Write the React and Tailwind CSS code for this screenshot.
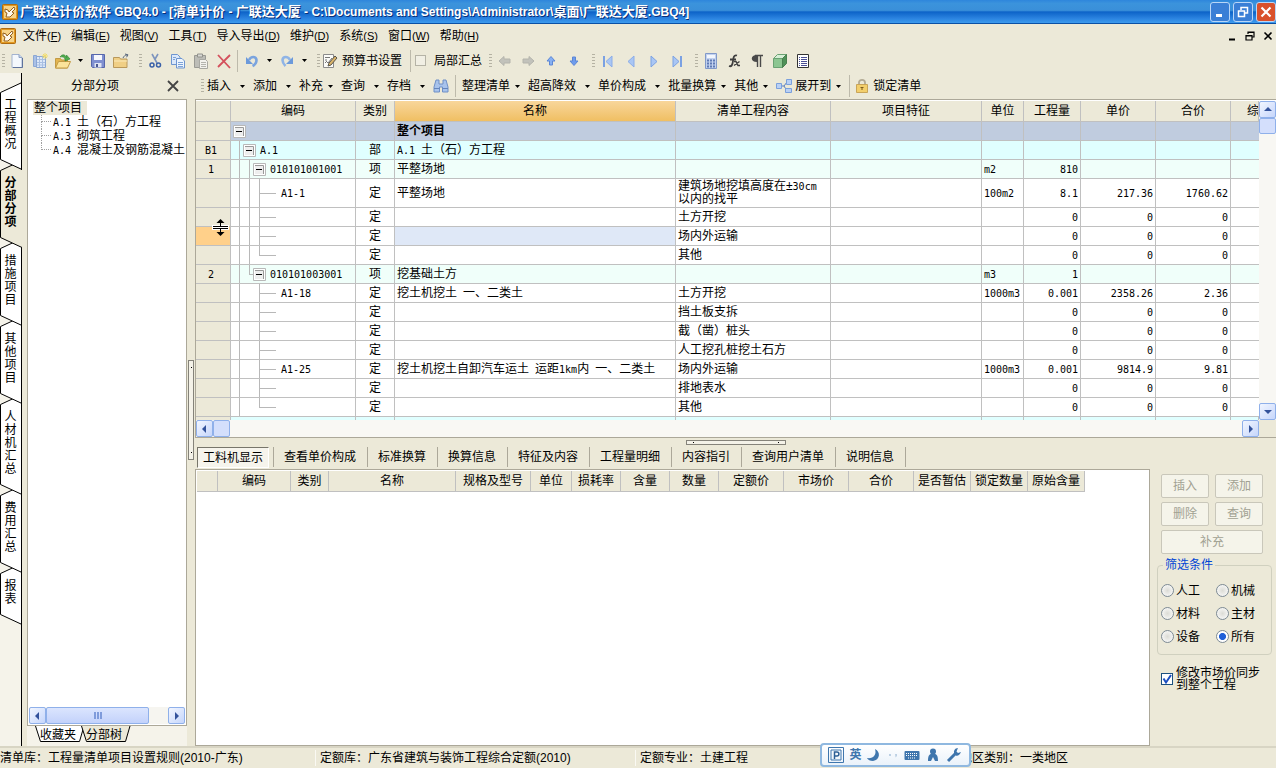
import React, { useState } from 'react'
import clsx from 'clsx'

const Ic = ({ children, className }) => (
  <svg viewBox="0 0 16 16" className={clsx('w-4 h-4 shrink-0', className)} fill="none" aria-hidden="true">
    {children}
  </svg>
)

const icons = {
  newFile: <Ic><path d="M3 1.500h7l3 3v10H3z" fill="#f4f8fd" stroke="#a3b3cf" /><path d="M10 1.500v3h3" fill="#c7d6ee" stroke="#8b9fc2" /><path d="M13.500 5v9.500H4" stroke="#5f739c" /></Ic>,
  newTable: <Ic><path d="M1.500 2.500h3v11h-3z" fill="#a9c0e6" stroke="#8ba7d4" /><path d="M4.500 3.500h9v11h-9z" fill="#dde8f8" stroke="#8ba7d4" /><path d="M5 6.500h8M5 9.500h8M5 12h8M7.500 4v10M10.500 4v10" stroke="#a9bfe2" /><path d="M13 0v6M10 3h6M11 1l4 4M15 1l-4 4" stroke="#f2dc6a" /></Ic>,
  open: <Ic><path d="M.5 5.500h5l1 1.500h6v8H.5z" fill="#e3b550" stroke="#c29a44" /><path d="M3.500 8.500h12l-3 6.500H.5z" fill="#fbe39a" stroke="#c29a44" /><path d="M5 4c2-3 5-3 6.500.5V2l3.500 4-5 2V6C9.500 4 7.500 3.500 5 4z" fill="#4fae4b" stroke="#2f7f35" strokeWidth=".6" /></Ic>,
  save: <Ic><path d="M1.500 1.500h13v13h-12l-1-1z" fill="#7f8fd0" stroke="#5767ab" /><path d="M4 2h8v5H4z" fill="#f6f7fc" /><path d="M4.500 10h7v4.500h-7z" fill="#dfe3f3" /><path d="M6 11h2v3H6z" fill="#4a5890" /></Ic>,
  folder: <Ic><path d="M.5 4.500h6l1 1.500h6.500v8.500H.5z" fill="#f0cf85" stroke="#b9985a" /><path d="M1 8h13" stroke="#fbeabb" /><path d="M10 5c1-2 2-3 4-3M12 1l3 .8-1.500 2.500" stroke="#56657c" /></Ic>,
  cut: <Ic><path d="M5 1l5 9M11 1L7.500 7" stroke="#7e95be" strokeWidth="1.600" /><circle cx="5" cy="12" r="2" stroke="#3960a8" strokeWidth="1.500" /><circle cx="11.500" cy="12" r="2" stroke="#3960a8" strokeWidth="1.500" /></Ic>,
  copy: <Ic><path d="M1.500 1.500h6l2.500 2.500v7.500H1.500z" fill="#dbe8fa" stroke="#6d95d0" /><path d="M6.500 5.500h5.500l2.500 2.500v7H6.500z" fill="#eef5fd" stroke="#6d95d0" /><path d="M8 9.500h5M8 11.500h5M8 13.500h5M3 4.500h3M3 6.500h2" stroke="#7ca2d8" /></Ic>,
  paste: <Ic><path d="M1.500 2.500h11v12h-11z" fill="#bdbdb7" stroke="#9a9a94" /><path d="M4.500 1h5v3h-5z" fill="#d9d9d4" stroke="#92928c" /><path d="M6.500 6.500h6l2 2v7h-8z" fill="#f2f2ee" stroke="#a8a8a2" /><path d="M8 9.500h5M8 11.500h5M8 13.500h5" stroke="#b4b4ae" /></Ic>,
  del: <Ic><path d="M2 2l12 13M14 2L2 14" stroke="#d4505c" strokeWidth="1.800" /></Ic>,
  undo: <Ic><path d="M5 7c2-4 7-4 7.500 0 0 3-2 5-4 6" stroke="#7ba4de" strokeWidth="2.600" /><path d="M2 4v7h7z" fill="#6c9adb" /></Ic>,
  redo: <Ic><path d="M11 7C9 3 4 3 3.500 7c0 3 1 4 3 6" stroke="#8fb4e6" strokeWidth="2.600" /><path d="M14 4v7H7z" fill="#6c9adb" /></Ic>,
  edit: <Ic><path d="M1.500 1.500h10v13h-10z" fill="#fbfbf8" stroke="#8b8b8b" /><path d="M3 4.500h5M3 7h2M3 9.500h1" stroke="#777" /><path d="M4 8l2 2 4-5" stroke="#777" /><path d="M6 13l1-3 6-7 2 2-6 7z" fill="#d9b36a" stroke="#5a564c" /></Ic>,
  left: <Ic><path d="M2 8l5-4.500v2.500h6v4H7v2.500z" fill="#c2c2bb" stroke="#b4b4ac" /></Ic>,
  right: <Ic><path d="M14 8L9 3.500v2.500H3v4h6v2.500z" fill="#c2c2bb" stroke="#b4b4ac" /></Ic>,
  up: <Ic><path d="M8 3.500L4 8h2.500v4h3V8H12z" fill="#86b0f2" stroke="#5c87d6" /></Ic>,
  down: <Ic><path d="M8 12.500L4 8h2.500V4h3v4H12z" fill="#6f9cec" stroke="#5c87d6" /></Ic>,
  first: <Ic><path d="M4 3v11" stroke="#7ba1e2" strokeWidth="2" /><path d="M12 3v11L6 8.500z" fill="#a9c6f4" stroke="#8bade8" /></Ic>,
  prev: <Ic><path d="M11 3v11L5 8.500z" fill="#a9c6f4" stroke="#8bade8" /></Ic>,
  next: <Ic><path d="M5 3v11l6-5.500z" fill="#a9c6f4" stroke="#7ba1e2" /></Ic>,
  last: <Ic><path d="M12 3v11" stroke="#7ba1e2" strokeWidth="2" /><path d="M4 3v11l6-5.500z" fill="#a9c6f4" stroke="#7ba1e2" /></Ic>,
  calc: <Ic><path d="M2.500.500h11v15h-11z" fill="#c3d2ef" stroke="#8199c8" /><path d="M4 2h8v3H4z" fill="#f2f6fd" /><path d="M4 7.500h8M4 10.500h8M4 13.500h8" stroke="#5f7ab5" strokeWidth="2" strokeDasharray="2 1" /></Ic>,
  fx: <Ic><path d="M11 2.500C8 1.500 7.500 4 7 8s-1.500 6-4 5M4 6.500h6" stroke="#3e3e3e" strokeWidth="1.800" /><path d="M8 8.500h2l2 4h2M13.500 8.500L8 12.500" stroke="#3e3e3e" strokeWidth="1.400" /></Ic>,
  para: <Ic><path d="M14 2.500H6M8.500 2v12M11.500 2v12" stroke="#4a4a4a" strokeWidth="1.400" /><path d="M8 2C1 2 1 9 8 9z" fill="#4a4a4a" /></Ic>,
  cube: <Ic><path d="M1.500 5.500h9v9h-9z" fill="#8cc691" stroke="#6ba273" /><path d="M1.500 5.500l4-4h9l-4 4z" fill="#d6efd6" stroke="#6ba273" /><path d="M10.500 5.500l4-4v9l-4 4z" fill="#4f9158" stroke="#48804f" /></Ic>,
  list: <Ic><path d="M2.500 1.500h11v13h-11z" fill="#fff" stroke="#333" /><path d="M4 4.500h1M4 6.500h1M4 8.500h1M4 10.500h1M4 12.500h1M6 4.500h6M6 6.500h6M6 8.500h6M6 10.500h6M6 12.500h6" stroke="#4a4f95" /></Ic>,
  find: <Ic><path d="M3 2h3v4h4V2h3l2 7v5H9.500V9h-3v5H1V9z" fill="#a8c3ec" stroke="#6f8fc6" /><path d="M1 10.500h5.500M9.500 10.500H15" stroke="#6485bd" /></Ic>,
  expand: <Ic><path d="M5 8h3M8 8l3-4M8 8l3 5" stroke="#5b7fc0" /><path d="M.5 5.500h5v5h-5zM10.500 1.500h5v5h-5zM9.500 10.500h6v4h-6z" fill="#b9d0f4" stroke="#7ba0dc" /></Ic>,
  lock: <Ic><path d="M5 7V4.500c0-3.500 6-3.500 6 0V7" stroke="#b3ab95" strokeWidth="1.800" /><path d="M2.500 6.500h11v8h-11z" fill="#f3cf6c" stroke="#c9a558" /><path d="M8 9v3M6.500 9.500h3" stroke="#7d5c1d" /></Ic>,
}

const AppLogo = () => (
  <Ic>
    <rect x=".5" y=".5" width="15" height="15" rx="1" fill="#e39a22" stroke="#b06c10" />
    <path d="M2 2h12v12H2z" fill="#f7d48a" />
    <path d="M3 5l3 1 1 2 5-5 1 2-3 3 2 1-4 4H4l1-4-2-1z" fill="#fffaf0" stroke="#8a520a" strokeWidth=".9" />
  </Ic>
)

// latin runs are set in a half-width mono so they line up with the hanzi
const Txt = ({ children }) =>
  String(children).split(/([\x20-\x7e]+)/).map((s, i) =>
    i % 2 ? <span key={i} className="font-['DejaVu_Sans_Mono',monospace] text-[10px] whitespace-pre">{s}</span> : s
  )

const Grip = ({ first }) => (
  <div className={clsx('flex justify-end shrink-0', first ? 'w-[5px]' : 'w-[11px] pr-px')}>
    <svg viewBox="0 0 3 14" className="w-[3px] h-[14px]" aria-hidden="true">
      <path d="M0 .5h3M0 3.500h3M0 6.500h3M0 9.500h3M0 12.500h3" stroke="#b5b2a3" />
    </svg>
  </div>
)

const Divider = ({ className }) => <div className={clsx('w-px h-[22px] bg-[#bdbaab] shrink-0', className)}></div>

const Caret = ({ size }) => (
  <button aria-label="更多" className={clsx('flex justify-center items-center h-5 shrink-0', size === 'wide' && 'w-[22px]', size === 'slim' && 'w-3', !size && 'w-[14px] mr-1')}>
    <svg viewBox="0 0 5 3" className="w-[5px] h-[3px]"><path d="M0 0h5L2.500 3z" fill="#000" /></svg>
  </button>
)

const IconBtn = ({ name, className }) => (
  <button aria-label={name} className={clsx('h-[22px] flex items-center justify-center shrink-0', className || 'w-[23px]')}>{icons[name]}</button>
)

const menus = [['文件', 'F'], ['编辑', 'E'], ['视图', 'V'], ['工具', 'T'], ['导入导出', 'D'], ['维护', 'D'], ['系统', 'S'], ['窗口', 'W'], ['帮助', 'H']]

const sideTabs = ['工程概况', '分部分项', '措施项目', '其他项目', '人材机汇总', '费用汇总', '报表']

const columns = [
  ['', 'w-[35px]'], ['编码', 'w-[125px]'], ['类别', 'w-[39px]'], ['名称', ''], ['清单工程内容', 'w-[155px]'], ['项目特征', 'w-[151px]'],
  ['单位', 'w-[42px]'], ['工程量', 'w-[57px]'], ['单价', 'w-[75px]'], ['合价', 'w-[75px]'], ['综', 'w-[28px]'],
]

// tree: one mark per level, | line, + tee, L or l end, . blank, - open box
const rows = [
  { tree: '-', name: '整个项目', kind: 'root' },
  { no: 'B1', tree: '|-', code: 'A.1', type: '部', name: 'A.1 土（石）方工程', kind: 'part' },
  { no: '1', tree: '||-', code: '010101001001', type: '项', name: '平整场地', unit: 'm2', qty: '810', kind: 'item' },
  { tree: '||+', code: 'A1-1', type: '定', name: '平整场地', work: '建筑场地挖填高度在±30cm\n以内的找平', unit: '100m2', qty: '8.1', price: '217.36', total: '1760.62', tall: true },
  { tree: '||+', type: '定', work: '土方开挖', qty: '0', price: '0', total: '0' },
  { tree: '||+', type: '定', work: '场内外运输', qty: '0', price: '0', total: '0', selected: true },
  { tree: '||L', type: '定', work: '其他', qty: '0', price: '0', total: '0' },
  { no: '2', tree: '|l-', code: '010101003001', type: '项', name: '挖基础土方', unit: 'm3', qty: '1', kind: 'item' },
  { tree: '|.+', code: 'A1-18', type: '定', name: '挖土机挖土 一、二类土', work: '土方开挖', unit: '1000m3', qty: '0.001', price: '2358.26', total: '2.36' },
  { tree: '|.+', type: '定', work: '挡土板支拆', qty: '0', price: '0', total: '0' },
  { tree: '|.+', type: '定', work: '截（凿）桩头', qty: '0', price: '0', total: '0' },
  { tree: '|.+', type: '定', work: '人工挖孔桩挖土石方', qty: '0', price: '0', total: '0' },
  { tree: '|.+', code: 'A1-25', type: '定', name: '挖土机挖土自卸汽车运土 运距1km内 一、二类土', work: '场内外运输', unit: '1000m3', qty: '0.001', price: '9814.9', total: '9.81' },
  { tree: '|.+', type: '定', work: '排地表水', qty: '0', price: '0', total: '0' },
  { tree: '|.L', type: '定', work: '其他', qty: '0', price: '0', total: '0' },
]

const Mark = ({ mark, leafWidth }) => {
  if (mark === '-') {
    return (
      <button aria-label="折叠" className="w-[13px] h-[13px] -ml-1.5 self-center shrink-0">
        <svg viewBox="0 0 13 13" className="w-[13px] h-[13px]">
          <path d="M.5.500h12v12H.5z" fill="#fff" stroke="#b8b8b8" />
          <path d="M2 2h8v9H2z" fill="#eeeeee" />
          <path d="M2 2.500h8.500V11" fill="none" stroke="#999" />
          <path d="M3 6.500h6" stroke="#000" />
        </svg>
      </button>
    )
  }
  const turns = mark === '+' || mark === 'L' || mark === 'l'
  return (
    <span className={clsx('flex flex-col shrink-0', leafWidth ? 'w-[17px]' : 'w-[10px]')}>
      <span className={clsx('flex-1 border-[#b8b8b8]', mark !== '.' && 'border-l', turns && 'border-b')}></span>
      <span className={clsx('flex-1 border-[#b8b8b8]', (mark === '|' || mark === '+') && 'border-l')}></span>
    </span>
  )
}

const Tree = ({ row }) => (
  <div className={clsx('flex pl-2', row.tall ? 'h-7' : 'h-[18px]')}>
    {row.tree.split('').map((m, i) => <Mark key={i} mark={m} leafWidth={i === 2} />)}
    {row.code && <span className={clsx('self-center', row.kind ? 'pl-1' : 'pl-[5px]')}><Txt>{row.code}</Txt></span>}
  </div>
)

const ScrollBtn = ({ dir, label }) => {
  const d = { up: 'M1 6l4-4 4 4z', down: 'M1 3l4 4 4-4z', left: 'M6 1L2 5l4 4z', right: 'M3 1l4 4-4 4z' }
  return (
    <button aria-label={label} className="w-[17px] h-[17px] shrink-0 border border-[#8fb0ea] rounded-[2px] bg-linear-to-br from-[#f2f6ff] to-[#c6d6fb] flex items-center justify-center">
      <svg viewBox="0 0 10 10" className="w-2.5 h-2.5"><path d={d[dir]} fill="#33529b" /></svg>
    </button>
  )
}

const BillTable = () => {
  const cell = 'border-r border-b border-[#c0c0c0] p-0'
  const tint = { root: 'bg-[#c0ccdf]', part: 'bg-[#e0ffff]', item: 'bg-[#f0fffa]' }
  return (
    <table className="w-full table-fixed border-separate border-spacing-0">
      <thead>
        <tr className="h-[21px] bg-[#ece9d8]">
          {columns.map(([label, w], i) => (
            <th key={i} className={clsx(cell, w, 'font-normal leading-5 whitespace-nowrap overflow-hidden', label === '名称' && 'bg-linear-to-b from-[#f8d69a] to-[#f0bf62]', i === 10 && 'text-left pl-4')}>{label}</th>
          ))}
        </tr>
      </thead>
      <tbody>
        {rows.map((r, i) => (
          <tr key={i} className={clsx(r.tall ? 'h-[29px]' : 'h-[19px]', r.kind ? tint[r.kind] : 'bg-white')}>
            <td className={clsx(cell, 'text-center', r.selected ? 'bg-[#ffd08a]' : 'bg-[#ece9d8]')}>
              {r.no && <span className="pr-1"><Txt>{r.no}</Txt></span>}
              {r.selected && (
                <span className="relative block">
                  <svg viewBox="0 0 17 19" className="absolute w-[17px] h-[19px] left-4 -top-[18px] z-10" aria-hidden="true">
                    <path d="M0 7h17v5H0z" fill="#fff" />
                    <path d="M1 8.500h15M1 10.500h15M8.500 3v5M8.500 11v5" stroke="#000" />
                    <path d="M4.500 5h8l-4-4zM4.500 14h8l-4 4z" fill="#000" />
                  </svg>
                </span>
              )}
            </td>
            <td className={cell}><Tree row={r} /></td>
            <td className={clsx(cell, 'text-center')}>{r.type}</td>
            <td className={clsx(cell, 'pl-0.5 whitespace-nowrap overflow-hidden', r.kind === 'root' && 'font-bold', r.selected && 'bg-[#dfe8f7]')}>{r.name && <Txt>{r.name}</Txt>}</td>
            <td className={clsx(cell, 'pl-0.5 whitespace-pre', r.tall && 'leading-[13px]')}>{r.work && <Txt>{r.work}</Txt>}</td>
            <td className={cell}></td>
            <td className={clsx(cell, 'pl-0.5')}>{r.unit && <Txt>{r.unit}</Txt>}</td>
            <td className={clsx(cell, 'text-right pr-0.5')}>{r.qty && <Txt>{r.qty}</Txt>}</td>
            <td className={clsx(cell, 'text-right pr-0.5')}>{r.price && <Txt>{r.price}</Txt>}</td>
            <td className={clsx(cell, 'text-right pr-0.5')}>{r.total && <Txt>{r.total}</Txt>}</td>
            <td className="border-b border-[#c0c0c0] p-0"></td>
          </tr>
        ))}
        <tr className="h-[3px] bg-[#e0ffff]">
          {columns.map((c, i) => <td key={i} className={clsx('p-0 border-r border-[#c0c0c0]', i === 0 && 'bg-[#ece9d8]')}></td>)}
        </tr>
      </tbody>
    </table>
  )
}

const SideTab = ({ label, active, order, onClick }) => {
  const h = label.length * 13 + 26
  return (
    <button onClick={onClick} style={{ zIndex: 10 - order }} className={clsx('relative w-[22px] pt-3 pb-[14px] pr-px', active && 'font-bold')}>
      <svg className="absolute left-0 -top-[5px] w-[22px]" style={{ height: h + 10 }} aria-hidden="true">
        <path d={`M0 10.500L22 .5V${h + 9.5}L0 ${h - 0.5}z`} fill={active ? '#ece9d8' : '#fff'} />
        <path d={`M22 .5L.5 10.500V${h - 0.5}L22 ${h + 9.5}`} fill="none" stroke="#000" />
        {!active && <path d={`M21.500 0V${h + 10}`} stroke="#000" />}
      </svg>
      <span className="relative block w-3 mx-auto leading-[13px] break-all">{label}</span>
    </button>
  )
}

const SideTabs = () => {
  const [active, setActive] = useState(1)
  return (
    <nav className="w-[22px] shrink-0 bg-[#f5f3ea] border-r border-black pt-[14px] flex flex-col items-start">
      {sideTabs.map((t, i) => <SideTab key={t} label={t} order={i} active={active === i} onClick={() => setActive(i)} />)}
    </nav>
  )
}

const ProjectTree = () => (
  <aside className="w-[160px] shrink-0 flex flex-col">
    <div className="h-[26px] flex items-center shrink-0">
      <span className="flex-1 text-center pl-1">分部分项</span>
      <button aria-label="关闭" className="w-7 flex justify-center">
        <svg viewBox="0 0 12 12" className="w-3 h-3"><path d="M1 1l10 10M11 1L1 11" stroke="#444" strokeWidth="1.800" /></svg>
      </button>
    </div>
    <div className="flex-1 min-h-0 bg-white border border-[#aca899] flex flex-col justify-between p-px">
      <ul className="leading-[14px] whitespace-nowrap pl-1 overflow-hidden">
        <li className="w-[54px] h-[14px] bg-[#ece9d8] pl-px">整个项目</li>
        {['A.1 土（石）方工程', 'A.3 砌筑工程', 'A.4 混凝土及钢筋混凝土'].map((t, i) => (
          <li key={t} className="flex pl-2 h-[14px]">
            <span className="w-3 flex flex-col">
              <span className="h-[7px] w-2.5 border-l border-b border-dotted border-[#a0a0a0]"></span>
              {i < 2 && <span className="h-[7px] border-l border-dotted border-[#a0a0a0]"></span>}
            </span>
            <span><Txt>{t}</Txt></span>
          </li>
        ))}
      </ul>
      <div className="flex h-[17px] bg-[#f6f5f0]">
        <ScrollBtn dir="left" label="向左" />
        <div className="w-[103px] border border-[#8fb0ea] rounded-[2px] bg-linear-to-b from-[#dbe5fe] to-[#c3d2fb] flex items-center justify-center gap-px">
          <i className="w-0.5 h-[7px] bg-[#7f9bdb]"></i><i className="w-0.5 h-[7px] bg-[#7f9bdb]"></i><i className="w-0.5 h-[7px] bg-[#7f9bdb]"></i>
        </div>
        <div className="flex-1"></div>
        <ScrollBtn dir="right" label="向右" />
      </div>
    </div>
    <div className="h-5 flex pl-2 shrink-0 items-start bg-[#f5f3ea]">
      {['收藏夹', '分部树'].map((t, i) => (
        <button key={t} className="relative w-[46px] h-[17px] leading-4 text-center">
          <svg viewBox="0 0 50 17" className="absolute left-0 top-0 w-[50px] h-[17px]" aria-hidden="true">
            <path d="M.5 0l5 15.500h39L49 0" fill={i ? '#ece9d8' : '#fff'} stroke="#000" />
          </svg>
          <span className="relative">{t}</span>
        </button>
      ))}
    </div>
  </aside>
)

const detailTabs = ['查看单价构成', '标准换算', '换算信息', '特征及内容', '工程量明细', '内容指引', '查询用户清单', '说明信息']

const detailCols = [
  ['', 'w-[21px]'], ['编码', 'w-[73px]'], ['类别', 'w-[38px]'], ['名称', 'w-[127px]'], ['规格及型号', 'w-[75px]'], ['单位', 'w-[41px]'],
  ['损耗率', 'w-[49px]'], ['含量', 'w-[49px]'], ['数量', 'w-[49px]'], ['定额价', 'w-[65px]'], ['市场价', 'w-[65px]'], ['合价', 'w-[65px]'],
  ['是否暂估', 'w-[57px]'], ['锁定数量', 'w-[57px]'], ['原始含量', 'w-[57px]'],
]

const DimButton = ({ children, className }) => (
  <button disabled className={clsx('h-6 border border-[#c9c7ba] rounded-[2px] bg-[#f5f4ea] text-[#a1a192]', className)}>{children}</button>
)

const FilterPanel = () => {
  const [kind, setKind] = useState('所有')
  const [sync, setSync] = useState(true)
  return (
    <div className="w-[126px] shrink-0 pl-[11px] pr-1 pt-[5px]">
      <div className="grid grid-cols-[48px_48px] gap-x-[6px] gap-y-1">
        <DimButton>插入</DimButton>
        <DimButton>添加</DimButton>
        <DimButton>删除</DimButton>
        <DimButton>查询</DimButton>
        <DimButton className="col-span-2">补充</DimButton>
      </div>
      <fieldset className="-ml-1 mt-px border border-[#d0d0bf] rounded-[4px] pl-[3px] pr-1 pt-1 pb-[6px]">
        <legend className="ml-0.5 px-0.5 text-[#0046d5] leading-5">筛选条件</legend>
        <div className="grid grid-cols-[55px_1fr]">
          {['人工', '机械', '材料', '主材', '设备', '所有'].map((k) => (
            <label key={k} className="h-[23px] flex items-center gap-0.5">
              <input type="radio" name="kind" checked={kind === k} onChange={() => setKind(k)}
                className="appearance-none w-[13px] h-[13px] rounded-full border border-[#7d8a94] bg-[radial-gradient(circle,#dcdcd6,#ffffff)] checked:bg-[radial-gradient(circle,#1f5fd8_40%,#ffffff_50%)]" />
              {k}
            </label>
          ))}
        </div>
      </fieldset>
      <label className="mt-3 flex items-center gap-[3px] leading-3">
        <span className="relative w-3 h-3 shrink-0">
          <input type="checkbox" checked={sync} onChange={() => setSync(!sync)} className="appearance-none block w-3 h-3 border border-[#1c5180] bg-white" />
          {sync && <svg viewBox="0 0 12 12" className="absolute inset-0 w-3 h-3 pointer-events-none"><path d="M2.500 5.500l2.500 4L10 2" stroke="#1c4fc0" strokeWidth="2" fill="none" /></svg>}
        </span>
        <span>修改市场价同步<br />到整个工程</span>
      </label>
    </div>
  )
}

const DetailPane = () => (
  <section className="flex-1 min-h-0 flex flex-col">
    <div className="h-[22px] flex items-start pl-0.5 shrink-0">
      <button className="w-[72px] h-[21px] leading-[18px] border border-[#77756a] border-r-white border-b-white bg-[#f6f4ec]">工料机显示</button>
      <div className="w-1 h-5 border-r border-[#aca899] ml-px"></div>
      {detailTabs.map((t) => <button key={t} className="h-5 pl-[10px] pr-[11px] leading-5 border-r border-[#aca899] whitespace-nowrap">{t}</button>)}
    </div>
    <div className="flex-1 min-h-0 flex">
      <div className="flex-1 min-w-0 bg-white border border-[#aca899] p-px overflow-hidden">
        <table className="table-fixed border-separate border-spacing-0 w-[888px]">
          <thead>
            <tr className="h-[21px] bg-[#ece9d8]">
              {detailCols.map(([t, w], i) => <th key={i} className={clsx('border-r border-b border-[#c0c0c0] p-0 font-normal leading-5 whitespace-nowrap', w)}>{t}</th>)}
            </tr>
          </thead>
        </table>
      </div>
      <FilterPanel />
    </div>
  </section>
)

const MainToolbar = () => (
  <div className="h-[25px] flex items-center shrink-0 whitespace-nowrap">
    <Grip first />
    <IconBtn name="newFile" />
    <IconBtn name="newTable" />
    <IconBtn name="open" />
    <Caret size="slim" />
    <IconBtn name="save" />
    <IconBtn name="folder" />
    <Grip />
    {['cut', 'copy', 'paste', 'del'].map((n) => <IconBtn key={n} name={n} />)}
    <Divider className="mx-0.5" />
    <IconBtn name="undo" />
    <Caret size="slim" />
    <IconBtn name="redo" />
    <Caret size="slim" />
    <Grip />
    <button className="flex items-center gap-1 px-px">{icons.edit}预算书设置</button>
    <Divider className="ml-[7px] mr-1" />
    <label className="flex items-center gap-2">
      <input type="checkbox" className="appearance-none w-[11px] h-[11px] border border-[#b5b3a6] bg-[#f1efe4]" />
      局部汇总
    </label>
    <Grip />
    {['left', 'right', 'up', 'down'].map((n) => <IconBtn key={n} name={n} />)}
    <Grip />
    {['first', 'prev', 'next', 'last'].map((n) => <IconBtn key={n} name={n} />)}
    <Grip />
    {['calc', 'fx', 'para', 'cube', 'list'].map((n) => <IconBtn key={n} name={n} />)}
  </div>
)

const BillToolbar = () => (
  <div className="h-[26px] flex items-center whitespace-nowrap pl-1 shrink-0">
    <Grip first />
    <button className="pl-[3px]">插入</button><Caret size="wide" />
    <button>添加</button><Caret size="wide" />
    <button>补充</button><Caret />
    <button>查询</button><Caret size="wide" />
    <button>存档</button><Caret size="wide" />
    <IconBtn name="find" className="w-4" />
    <Divider className="mx-1.5" />
    <button>整理清单</button><Caret />
    <button>超高降效</button><Caret size="wide" />
    <button>单价构成</button><Caret size="wide" />
    <button>批量换算</button><Caret />
    <button>其他</button><Caret />
    <button className="flex items-center gap-[3px]">{icons.expand}展开到</button><Caret />
    <Divider className="mr-1" />
    <button className="flex items-center gap-[3px]">{icons.lock}锁定清单</button>
  </div>
)

const InputBar = () => (
  <div className="absolute left-[820px] bottom-px w-[151px] h-6 rounded-[4px] border-2 border-[#8fb8e0] bg-linear-to-b from-white to-[#eaf2fa] flex items-center justify-around px-1 text-[#3f76ad] font-bold">
    <svg viewBox="0 0 16 16" className="w-4 h-4" aria-hidden="true"><path d="M.5.500h15v15H.5zM3 3h10v10H3z" fill="none" stroke="#3f76ad" /><path d="M6.500 12V5h2.500c2.500 0 2.500 4 0 4H6.500" fill="none" stroke="#2c5f95" strokeWidth="1.500" /></svg>
    <span>英</span>
    <svg viewBox="0 0 16 16" className="w-4 h-4" aria-hidden="true"><path d="M9 2c6 3 5 11-2 12-3 0-5-1-6-3 6 1 10-3 8-9z" fill="#3f76ad" /></svg>
    <svg viewBox="0 0 12 12" className="w-3 h-3" aria-hidden="true"><path d="M2 5h2v2H2zM8 5h2v2L8.500 8.500z" fill="#bcd0e4" /></svg>
    <svg viewBox="0 0 16 16" className="w-4 h-4" aria-hidden="true"><rect x=".5" y="4" width="15" height="9" rx="1" fill="#3f76ad" /><path d="M2 6.500h12M2 8.500h12M4 11h8" stroke="#fff" strokeDasharray="1 1" /></svg>
    <svg viewBox="0 0 16 16" className="w-4 h-4" aria-hidden="true"><circle cx="8" cy="4.500" r="3" fill="#3f76ad" /><path d="M3 14c0-7 2-7 5-7s5 0 5 7h-3l-2-4-2 4z" fill="#3f76ad" /></svg>
    <svg viewBox="0 0 16 16" className="w-4 h-4" aria-hidden="true"><path d="M2 14l8-8" stroke="#3f76ad" strokeWidth="3" /><path d="M12 1C9 1 7 4 8.500 7s5 2 6.500-2l-3 1-1.500-1.500z" fill="#3f76ad" /></svg>
  </div>
)

const winBtn = 'w-5 h-5 rounded-[3px] border border-[#b9d6f7] flex items-center justify-center'

const App = () => {
  return (
    <div className="relative h-screen flex flex-col bg-[#ece9d8] text-black text-[12px] leading-4 overflow-hidden font-['Liberation_Sans','Noto_Sans_CJK_SC',sans-serif]">
      <header className="h-6 shrink-0 flex items-center justify-between px-0.5 border-b border-[#0b50a5] bg-[linear-gradient(to_bottom,#2e86dc,#3b93dc_15%,#3a8fd9_45%,#0d63c8_52%,#2b83e0_80%,#3d9bee)]">
        <div className="flex items-center gap-0.5 overflow-hidden">
          <AppLogo />
          <h1 className="text-[13px] font-bold text-white whitespace-nowrap [text-shadow:1px_1px_0_#0a2f78]">
            {'广联达计价软件 GBQ4.0 - [清单计价 - 广联达大厦 - C:\\Documents and Settings\\Administrator\\桌面\\广联达大厦.GBQ4]'.split(/([\x20-\x7e]+)/).map((s, i) =>
              i % 2 ? <span key={i} className="text-[12px] whitespace-pre">{s}</span> : s
            )}
          </h1>
        </div>
        <div className="flex gap-[3px] -mr-0.5">
          <button aria-label="最小化" className={clsx(winBtn, 'bg-[#3a7fd6]')}><svg viewBox="0 0 12 12" className="w-3 h-3"><path d="M2 9.500h6" stroke="#fff" strokeWidth="3" /></svg></button>
          <button aria-label="还原" className={clsx(winBtn, 'bg-[#3a7fd6]')}><svg viewBox="0 0 12 12" className="w-3 h-3"><path d="M4 4V1.500h6.500V7H8M1.500 5h6v5.500h-6z" stroke="#fff" strokeWidth="1.500" fill="none" /></svg></button>
          <button aria-label="关闭窗口" className={clsx(winBtn, 'bg-[#d9512c]')}><svg viewBox="0 0 12 12" className="w-3 h-3"><path d="M1.500 1.500l9 9M10.500 1.500l-9 9" stroke="#fff" strokeWidth="2.200" /></svg></button>
        </div>
      </header>
      <div className="h-6 shrink-0 flex items-center">
        <AppLogo />
        <nav className="flex gap-[10px] pl-[7px] flex-1">
          {menus.map(([label, key]) => (
            <button key={label} className="whitespace-nowrap">{label}<span className="text-[11px]">(<u>{key}</u>)</span></button>
          ))}
        </nav>
        <div className="flex gap-2 pr-[3px]">
          <button aria-label="最小化文档"><svg viewBox="0 0 10 10" className="w-2.5 h-2.5"><path d="M2 8.500h6" stroke="#000" strokeWidth="2" /></svg></button>
          <button aria-label="还原文档"><svg viewBox="0 0 10 10" className="w-2.5 h-2.5"><path d="M3 3V1h6v5H7M1 4.500h6V9H1zM3 1.500h6M1 5h6" stroke="#000" strokeWidth="1.200" fill="none" /></svg></button>
          <button aria-label="关闭文档"><svg viewBox="0 0 10 10" className="w-2.5 h-2.5"><path d="M1.500 1.500l7 7M8.500 1.500l-7 7" stroke="#000" strokeWidth="1.600" /></svg></button>
        </div>
      </div>
      <MainToolbar />
      <div className="flex-1 min-h-0 flex">
        <SideTabs />
        <div className="w-[5px] shrink-0"></div>
        <ProjectTree />
        <div className="w-2 shrink-0 flex items-center justify-center">
          <div className="w-1.5 h-[100px] border border-[#85837a] bg-[#f4f2e8] flex flex-col items-center justify-between py-1.5">
            <i className="w-px h-px bg-black"></i><i className="w-px h-px bg-black"></i>
          </div>
        </div>
        <main className="flex-1 min-w-0 flex flex-col">
          <BillToolbar />
          <section className="border border-r-0 border-[#aca899] pt-px bg-white shrink-0">
            <div className="flex">
              <div className="flex-1 min-w-0 overflow-hidden"><BillTable /></div>
              <div className="w-[17px] shrink-0 flex flex-col bg-[#f8f7f3]">
                <ScrollBtn dir="up" label="向上" />
                <div className="h-4 border border-[#8fb0ea] rounded-[2px] bg-[#d4dffc]"></div>
                <div className="flex-1"></div>
                <ScrollBtn dir="down" label="向下" />
              </div>
            </div>
            <div className="flex h-[17px] bg-[#f9f8f4]">
              <ScrollBtn dir="left" label="向左" />
              <div className="w-[17px] border border-[#8fb0ea] rounded-[2px] bg-[#d4dffc]"></div>
              <div className="flex-1"></div>
              <ScrollBtn dir="right" label="向右" />
              <div className="w-[17px] bg-[#ece9d8]"></div>
            </div>
          </section>
          <div className="h-[9px] shrink-0 flex items-center justify-center">
            <div className="w-[100px] h-[5px] border border-[#85837a] bg-[#f4f2e8] flex items-center justify-between px-1.5">
              <i className="w-px h-px bg-black"></i><i className="w-px h-px bg-black"></i>
            </div>
          </div>
          <DetailPane />
        </main>
      </div>
      <footer className="h-[22px] shrink-0 border-t-2 border-[#d8d5c4] grid grid-cols-[320px_320px_320px_1fr] items-center whitespace-nowrap">
        <span className="mr-1 border-r border-[#faf9f3]">清单库：工程量清单项目设置规则(2010-广东)</span>
        <span className="mr-1 border-r border-[#faf9f3]">定额库：广东省建筑与装饰工程综合定额(2010)</span>
        <span className="mr-1 border-r border-[#faf9f3]">定额专业：土建工程</span>
        <span>地区类别：一类地区</span>
      </footer>
      <InputBar />
    </div>
  )
}

export default App
